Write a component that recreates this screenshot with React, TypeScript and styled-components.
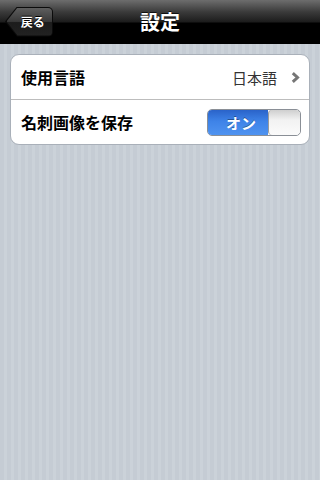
import * as React from 'react';
import styled, { createGlobalStyle } from 'styled-components';

const GlobalStyle = createGlobalStyle`
  html, body {
    margin: 0;
    padding: 0;
  }
  body {
    font-family: "Noto Sans CJK JP", "Liberation Sans", sans-serif;
  }
`;

const Screen = styled.div`
  width: 320px;
  height: 480px;
  display: flex;
  flex-direction: column;
  overflow: hidden;
  background: repeating-linear-gradient(
    90deg,
    #c5ccd4 0px,
    #c5ccd4 4px,
    #cbd2d9 4px,
    #cbd2d9 7px
  );
`;

const NavBar = styled.div`
  height: 44px;
  flex-shrink: 0;
  display: grid;
  grid-template-columns: 60px 1fr 60px;
  align-items: center;
  background: linear-gradient(
    to bottom,
    #6d6d6d 0px,
    #3a3a3a 12px,
    #1c1c1c 22px,
    #000000 23px,
    #000000 44px
  );
  border-bottom: 1px solid #000;
  box-sizing: border-box;
`;

const BackOuter = styled.div`
  margin-left: 5px;
  width: 48px;
  height: 30px;
  background: #0b0b0b;
  clip-path: polygon(12px 0, 100% 0, 100% 100%, 12px 100%, 0 50%);
  border-radius: 0 5px 5px 0;
  display: flex;
`;

const BackInner = styled.div`
  margin: 1px 1px 1px 1.5px;
  flex: 1;
  background: linear-gradient(to bottom, #5e5e5e 0%, #3a3a3a 48%, #1c1c1c 52%, #222 100%);
  clip-path: polygon(11px 0, 100% 0, 100% 100%, 11px 100%, 0 50%);
  border-radius: 0 4px 4px 0;
  display: flex;
  align-items: center;
  justify-content: center;
  padding-left: 7px;
  color: #fff;
  font-size: 12px;
  font-weight: bold;
  text-shadow: 0 -1px 0 #000;
`;

const Title = styled.div`
  text-align: center;
  color: #fff;
  font-size: 20px;
  font-weight: bold;
  text-shadow: 0 -1px 0 rgba(0, 0, 0, 0.7);
`;

const Card = styled.div`
  margin: 10px 10px 0 10px;
  background: #fff;
  border: 1px solid #a9b0b9;
  border-radius: 9px;
  display: flex;
  flex-direction: column;
`;

const Row = styled.div<{ $last?: boolean }>`
  height: 44px;
  display: flex;
  align-items: center;
  padding: 0 9px 0 10px;
  border-bottom: ${({ $last }) => ($last ? 'none' : '1px solid #bdbdbd')};
`;

const Label = styled.div`
  flex: 1;
  font-size: 16px;
  font-weight: bold;
  color: #000;
`;

const Value = styled.div`
  font-size: 15px;
  color: #333;
  margin-right: 14px;
`;

const Chevron = styled.svg`
  width: 9px;
  height: 11px;
`;

const Toggle = styled.div`
  width: 94px;
  height: 27px;
  box-sizing: border-box;
  border: 1px solid #8a8f96;
  border-radius: 5px;
  overflow: hidden;
  display: flex;
  margin-right: -1px;
`;

const ToggleOn = styled.div`
  width: 54px;
  display: flex;
  align-items: center;
  justify-content: center;
  padding-left: 6px;
  background: linear-gradient(to bottom, #2a63c9 0%, #3e83e8 45%, #4f93f0 100%);
  color: #fff;
  font-size: 15px;
  font-weight: bold;
  text-shadow: 0 -1px 0 rgba(0, 0, 0, 0.35);
`;

const Knob = styled.div`
  flex: 1;
  border-left: 1px solid #9a9a9a;
  border-radius: 4px;
  background: linear-gradient(to bottom, #cfcfcf 0%, #f2f2f2 40%, #fbfbfb 100%);
`;

export default function App() {
  return (
    <>
      <GlobalStyle />
      <Screen>
        <NavBar>
          <BackOuter>
            <BackInner>戻る</BackInner>
          </BackOuter>
          <Title>設定</Title>
          <div />
        </NavBar>
        <Card>
          <Row>
            <Label>使用言語</Label>
            <Value>日本語</Value>
            <Chevron viewBox="0 0 9 11">
              <path d="M1.8 1.2 L6.5 5.5 L1.8 9.8" fill="none" stroke="#767676" strokeWidth="3" />
            </Chevron>
          </Row>
          <Row $last>
            <Label>名刺画像を保存</Label>
            <Toggle>
              <ToggleOn>オン</ToggleOn>
              <Knob />
            </Toggle>
          </Row>
        </Card>
      </Screen>
    </>
  );
}
